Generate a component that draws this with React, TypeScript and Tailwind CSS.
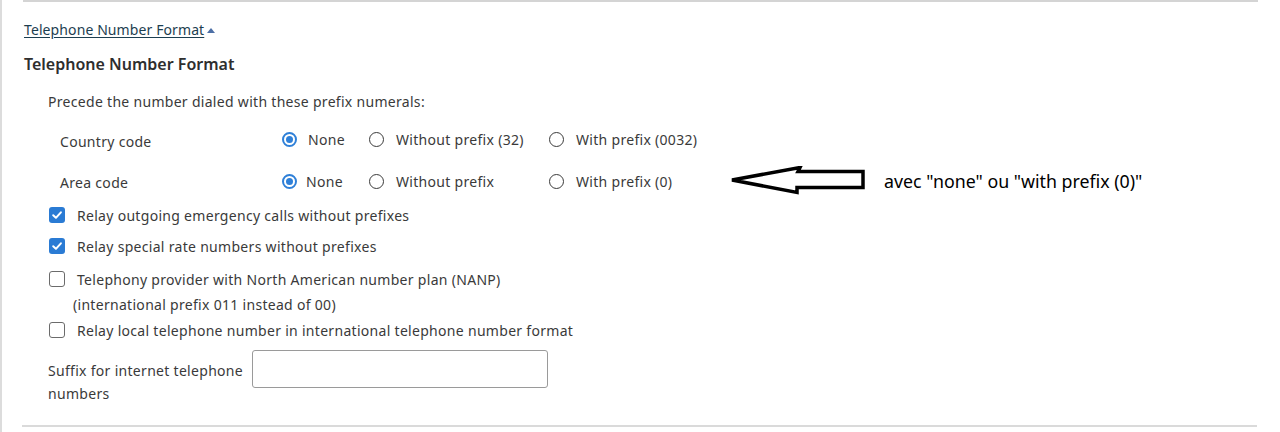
import React from "react";

const font = { fontFamily: '"Noto Sans", "Liberation Sans", sans-serif' };

function Radio({ checked, label, width, textGap = "ml-[12px]" }: { checked?: boolean; label: string; width: string; textGap?: string }) {
  return (
    <div className={`flex items-center ${width}`}>
      {checked ? (
        <span className="flex h-[15px] w-[15px] shrink-0 items-center justify-center rounded-full border-[2px] border-[#2f80d8] bg-white">
          <span className="h-[7px] w-[7px] rounded-full bg-[#2f80d8]" />
        </span>
      ) : (
        <span className="h-[15px] w-[15px] shrink-0 rounded-full border-[1.5px] border-[#3a3a3a] bg-white" />
      )}
      <span className={`${textGap} whitespace-nowrap text-[14px] tracking-[0.3px] text-[#3a3a3a]`}>{label}</span>
    </div>
  );
}

function Check({ checked }: { checked?: boolean }) {
  return checked ? (
    <span className="flex h-[16px] w-[16px] shrink-0 items-center justify-center rounded-[3px] bg-[#2a7bd4]">
      <svg width="12" height="12" viewBox="0 0 12 12" fill="none">
        <path d="M2.2 6.3 L4.9 8.8 L9.9 3.3" stroke="white" strokeWidth="2" strokeLinecap="round" strokeLinejoin="round" />
      </svg>
    </span>
  ) : (
    <span className="h-[16px] w-[16px] shrink-0 rounded-[3px] border-[1.5px] border-[#6b6b6b] bg-white" />
  );
}

function Arrow() {
  return (
    <svg width="140" height="30" viewBox="0 0 140 30" className="block shrink-0">
      <path
        d="M2 14 L70 1.5 L68 5.5 L133 5.5 L133 21.5 L67 21.5 L67 26.5 Z"
        fill="white"
        stroke="black"
        strokeWidth="3.5"
        strokeLinejoin="miter"
      />
    </svg>
  );
}

const body = "text-[14px] tracking-[0.3px] text-[#3a3a3a] whitespace-nowrap";

export default function App() {
  return (
    <div className="relative h-[432px] w-[1280px] overflow-hidden border-l-[2px] border-[#dcdcdc] bg-white" style={font}>
      <div className="ml-[21px] h-[2px] w-[1235px] bg-[#d4d4d4]" />

      <div className="mt-[19px] flex h-[18px] items-center pl-[22px]">
        <span className="text-[14px] leading-none tracking-[0.1px] text-[#1d3e50] underline underline-offset-[2px]">Telephone Number Format</span>
        <svg width="10" height="8" viewBox="0 0 10 8" className="ml-[2px]">
          <path d="M1 7 L5 2 L9 7 Z" fill="#4d6fa6" />
        </svg>
      </div>

      <div className="mt-[15px] flex h-[20px] items-center pl-[22px]">
        <span className="text-[16px] font-semibold text-[#2e2e2e]">Telephone Number Format</span>
      </div>

      <div className="mt-[18px] flex h-[18px] items-center pl-[46px]">
        <span className={body}>Precede the number dialed with these prefix numerals:</span>
      </div>

      <div className="mt-[15px] flex h-[28px] items-center pl-[58px]">
        <span className={`w-[222px] pt-[5px] ${body}`}>Country code</span>
        <Radio checked label="None" width="w-[87px]" textGap="ml-[11px]" />
        <Radio label="Without prefix (32)" width="w-[180px]" />
        <Radio label="With prefix (0032)" width="w-[181px]" />
      </div>

      <div className="mt-[14px] flex h-[28px] items-center pl-[58px]">
        <span className={`w-[222px] pt-[3px] ${body}`}>Area code</span>
        <Radio checked label="None" width="w-[87px]" textGap="ml-[9px]" />
        <Radio label="Without prefix" width="w-[180px]" />
        <Radio label="With prefix (0)" width="w-[181px]" />
        <Arrow />
        <span className="ml-[14px] whitespace-nowrap text-[17.8px] text-black" style={{ fontFamily: '"Noto Sans", "Liberation Sans", sans-serif' }}>
          avec "none" ou "with prefix (0)"
        </span>
      </div>

      <div className="mt-[8px] flex h-[24px] items-center pl-[47px]">
        <Check checked />
        <span className={`ml-[12px] ${body}`}>Relay outgoing emergency calls without prefixes</span>
      </div>
      <div className="mt-[7px] flex h-[24px] items-center pl-[47px]">
        <Check checked />
        <span className={`ml-[12px] ${body}`}>Relay special rate numbers without prefixes</span>
      </div>
      <div className="mt-[9px] flex h-[24px] items-center pl-[47px]">
        <Check />
        <span className={`ml-[12px] ${body}`}>Telephony provider with North American number plan (NANP)</span>
      </div>
      <div className="mt-[3px] flex h-[20px] items-center pl-[71px]">
        <span className={body}>(international prefix 011 instead of 00)</span>
      </div>
      <div className="mt-[4px] flex h-[24px] items-center pl-[47px]">
        <Check />
        <span className={`ml-[12px] ${body}`}>Relay local telephone number in international telephone number format</span>
      </div>

      <div className="mt-[8px] flex items-start pl-[46px]">
        <span className="w-[204px] pt-[9px] text-[14px] leading-[23px] tracking-[0.3px] text-[#3a3a3a]">
          Suffix for internet telephone numbers
        </span>
        <input className="h-[38px] w-[296px] rounded-[3px] border border-[#9a9a9a] bg-white outline-none" />
      </div>

      <div className="ml-[20px] mt-[20px] h-[2px] w-[1235px] bg-[#dadada]" />
    </div>
  );
}
